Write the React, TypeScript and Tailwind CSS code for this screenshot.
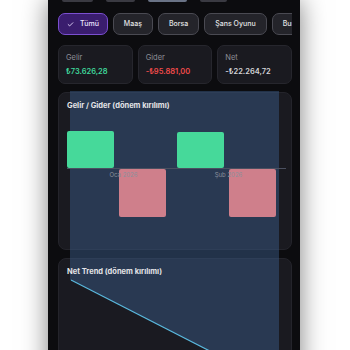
import React from "react";

const font = { fontFamily: "Inter, 'Noto Sans', sans-serif" };

function Check() {
  return (
    <svg width="7" height="7" viewBox="0 0 24 24" fill="none" stroke="#e9ddff" strokeWidth="3" strokeLinecap="round" strokeLinejoin="round">
      <path d="M20 6 9 17l-5-5" />
    </svg>
  );
}

function Chip({ label, active }: { label: string; active?: boolean }) {
  return (
    <div
      className={
        "h-[22px] shrink-0 rounded-[7px] border flex items-center gap-[6px] text-[7px] font-medium whitespace-nowrap " +
        (active
          ? "bg-[#3a1d6e] border-[#7b4fd0] text-[#eee6ff] pl-[8px] pr-[8px]"
          : "bg-[#24242a] border-[#4a4a52] text-[#e4e4e7] px-[10px]")
      }
    >
      {active && <Check />}
      {label}
    </div>
  );
}

function Stat({ label, value, color }: { label: string; value: string; color: string }) {
  return (
    <div className="h-[39px] rounded-[7px] bg-[#1a1a20] border border-[#26262d] pl-[7px] pt-[7px] flex flex-col gap-[4px]">
      <div className="text-[7.5px] text-[#8e8e96] leading-[10px]">{label}</div>
      <div className={"text-[7.5px] font-semibold leading-[10px] " + color}>{value}</div>
    </div>
  );
}

export default function App() {
  return (
    <div className="h-[350px] w-[350px] overflow-hidden bg-white flex" style={font}>
      <div className="relative ml-[48px] w-[252px] h-[400px] shrink-0 bg-[#0c0c0f] shadow-[0_0_24px_rgba(0,0,0,0.5)] pl-[10px] pr-[8px]">
        {/* scrolled-off row remnants */}
        <div className="flex h-[2px] pl-[4px]">
          <div className="w-[31px] h-[2px] bg-[#3a3a42] rounded-b" />
          <div className="w-[29px] h-[2px] bg-[#3a3a42] rounded-b ml-[13px]" />
          <div className="w-[39px] h-[2px] bg-[#6a7386] rounded-b ml-[13px]" />
          <div className="w-[27px] h-[2px] bg-[#3a3a42] rounded-b ml-[13px]" />
        </div>

        {/* chips */}
        <div className="mt-[11px] flex gap-[5px] overflow-hidden">
          <Chip label="Tümü" active />
          <Chip label="Maaş" />
          <Chip label="Borsa" />
          <Chip label="Şans Oyunu" />
          <Chip label="Burslar" />
        </div>

        {/* stats */}
        <div className="mt-[10px] grid grid-cols-3 gap-[5px]">
          <Stat label="Gelir" value="₺73.626,28" color="text-[#3fd69a]" />
          <Stat label="Gider" value="-₺95.881,00" color="text-[#ef4a4a]" />
          <Stat label="Net" value="-₺22.264,72" color="text-[#d4d4d8]" />
        </div>

        {/* bar chart card */}
        <div className="mt-[8px] h-[158px] rounded-[8px] bg-[#1a1a20] border border-[#24242b] relative">
          <div className="relative z-[2] pl-[8px] pt-[8px] text-[7.5px] font-bold text-[#e4e4e7] leading-[10px]">
            Gelir / Gider (dönem kırılımı)
          </div>
          <svg className="absolute left-0 top-0 z-[2]" width="234" height="158">
            <rect x="8" y="38" width="47" height="37" rx="2" fill="#46d99a" />
            <rect x="118" y="39" width="47" height="36" rx="2" fill="#46d99a" />
            <rect x="60" y="76" width="47" height="48" rx="2" fill="#cf7f8b" />
            <rect x="170" y="76" width="47" height="48" rx="2" fill="#cf7f8b" />
            <line x1="8" y1="75.5" x2="227" y2="75.5" stroke="#4b5060" strokeWidth="1" />
            <text x="64.5" y="83.5" textAnchor="middle" fontSize="6" fill="#8a909c" fontFamily="Inter, sans-serif">Oca 2026</text>
            <text x="169.5" y="83.5" textAnchor="middle" fontSize="6" fill="#8a909c" fontFamily="Inter, sans-serif">Şub 2026</text>
          </svg>
        </div>

        {/* net trend card */}
        <div className="mt-[8px] h-[130px] rounded-[8px] bg-[#1a1a20] border border-[#24242b] relative overflow-hidden">
          <div className="relative z-[2] pl-[8px] pt-[8px] text-[7.5px] font-bold text-[#e4e4e7] leading-[10px]">
            Net Trend (dönem kırılımı)
          </div>
          <svg className="absolute left-0 top-0 z-[2]" width="234" height="130">
            <polygon points="12,21 227,131 227,200 0,200 0,21" fill="#1a1a21" />
            <line x1="12" y1="21" x2="227" y2="131" stroke="#5ab8dd" strokeWidth="1.2" />
          </svg>
        </div>

        {/* tooltip cursor overlay */}
        <div className="absolute z-[1] left-[22px] top-[91px] w-[209px] h-[320px] bg-[rgba(56,88,132,0.5)] pointer-events-none" />
      </div>
    </div>
  );
}
